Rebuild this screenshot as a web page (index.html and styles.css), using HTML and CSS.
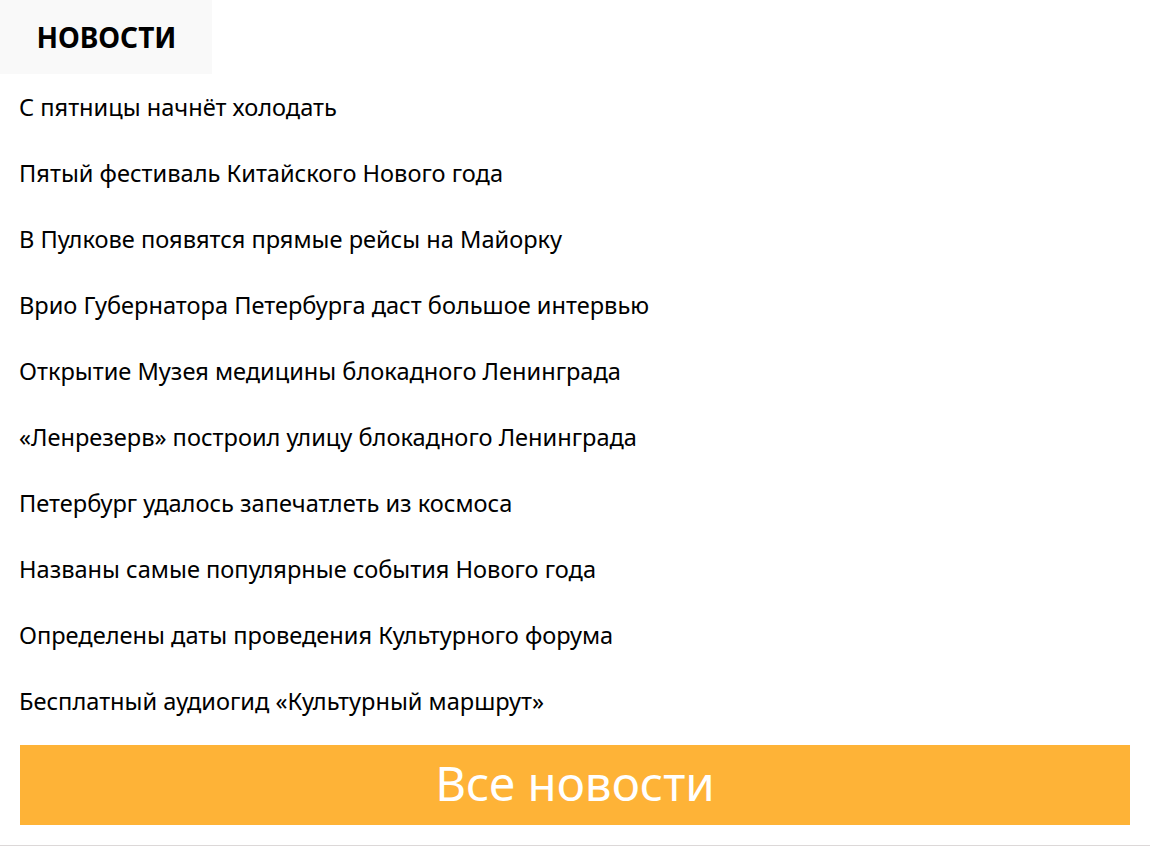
FILE: index.html
```html
<!DOCTYPE html>
<html lang="ru">
<head>
<meta charset="utf-8">
<link rel="stylesheet" href="styles.css">
</head>
<body>
<div class="news">
  <div class="news-head"><h2 class="news-title">НОВОСТИ</h2></div>
  <ul class="news-list">
    <li class="news-item">С пятницы начнёт холодать</li>
    <li class="news-item">Пятый фестиваль Китайского Нового года</li>
    <li class="news-item">В Пулкове появятся прямые рейсы на Майорку</li>
    <li class="news-item">Врио Губернатора Петербурга даст большое интервью</li>
    <li class="news-item">Открытие Музея медицины блокадного Ленинграда</li>
    <li class="news-item">«Ленрезерв» построил улицу блокадного Ленинграда</li>
    <li class="news-item">Петербург удалось запечатлеть из космоса</li>
    <li class="news-item">Названы самые популярные события Нового года</li>
    <li class="news-item">Определены даты проведения Культурного форума</li>
    <li class="news-item">Бесплатный аудиогид «Культурный маршрут»</li>
  </ul>
  <a class="news-all">Все новости</a>
</div>
<div class="edge"></div>
</body>
</html>
```
FILE: styles.css
```css
html, body {
  margin: 0;
  padding: 0;
  background: #fff;
}
body {
  font-family: "Noto Sans", "Open Sans", sans-serif;
  color: #000;
  height: 846px;
  display: flex;
  flex-direction: column;
}
.news {
  flex: 1;
}
.news-head {
  width: 212px;
  height: 74px;
  background: #f9f9f9;
  display: flex;
  align-items: center;
  justify-content: center;
}
.news-title {
  margin: 0 0 0 1px;
  font-size: 28px;
  font-weight: 700;
  letter-spacing: 0;
}
.news-list {
  list-style: none;
  margin: 0;
  padding: 0 0 0 19px;
}
.news-item {
  height: 66px;
  line-height: 66px;
  font-size: 23.6px;
}
.news-all {
  display: flex;
  align-items: center;
  justify-content: center;
  margin: 11px 20px 0;
  height: 80px;
  padding-bottom: 5px;
  box-sizing: border-box;
  background: #feb337;
  color: #fff;
  font-size: 47.5px;
  text-decoration: none;
}
.edge {
  height: 1px;
  background: #dcd8d8;
}
```
